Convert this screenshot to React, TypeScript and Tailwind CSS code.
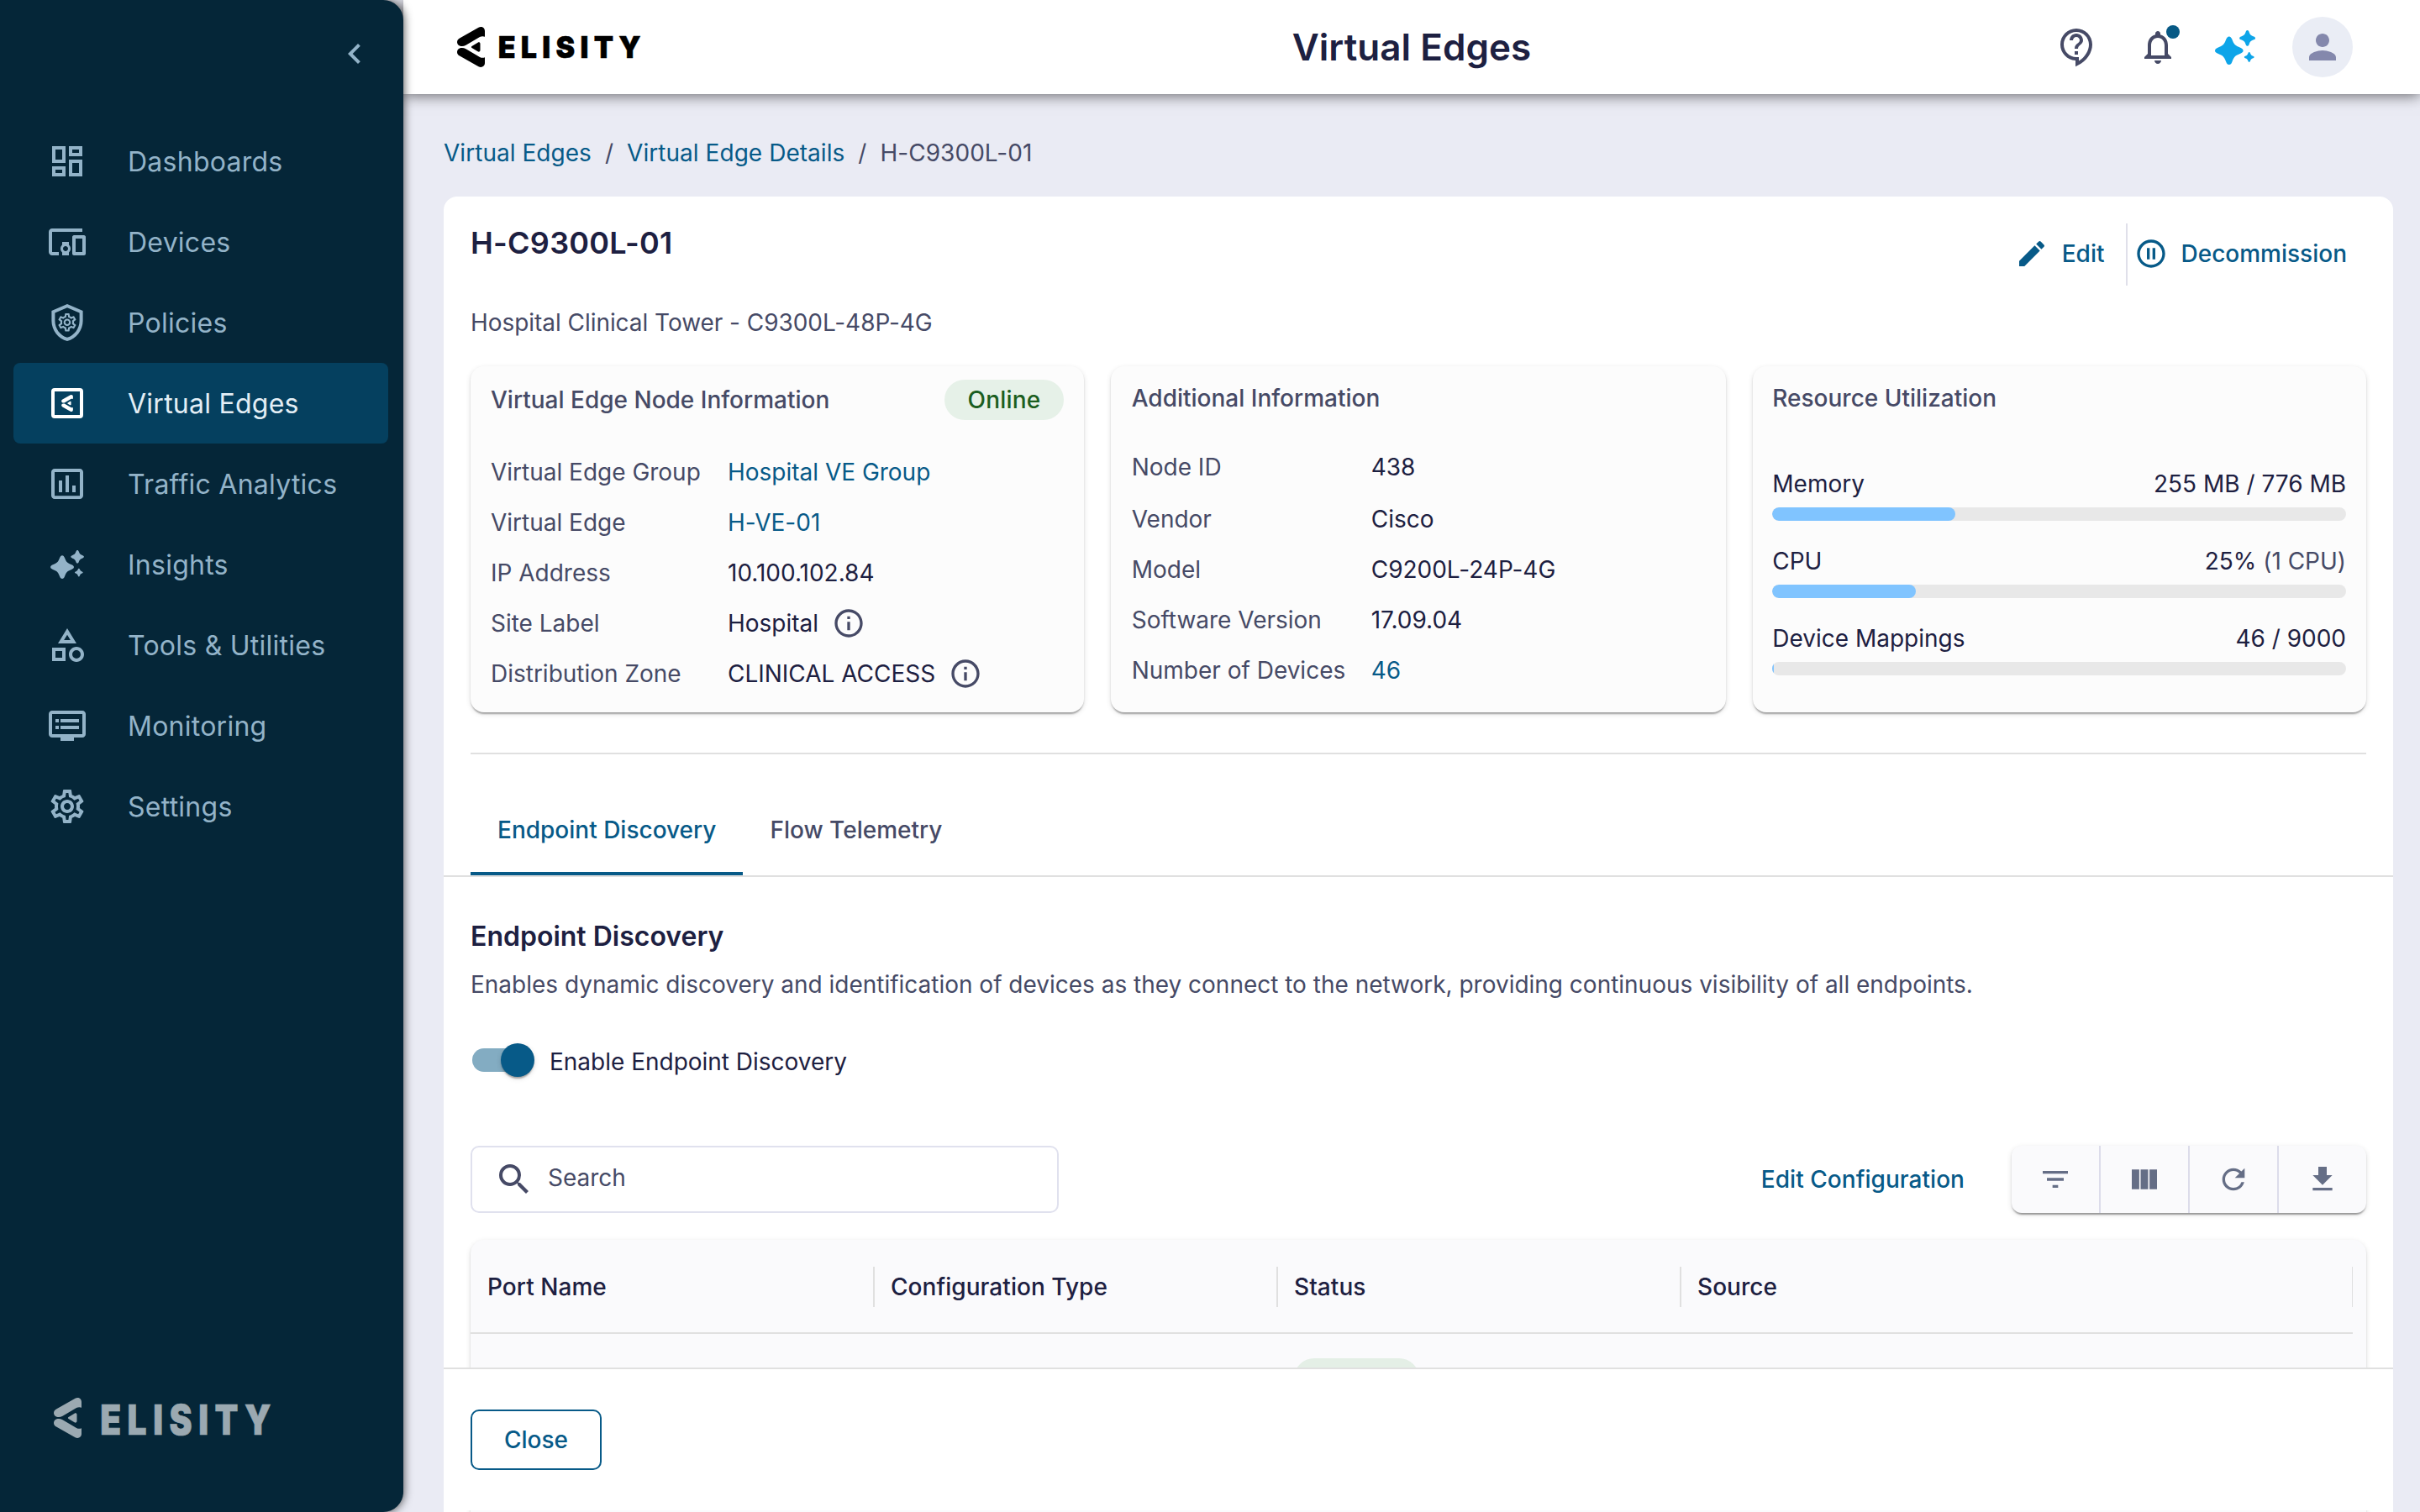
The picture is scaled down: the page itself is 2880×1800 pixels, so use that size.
import type { ReactNode } from "react"
import {
  MdChevronLeft,
  MdDevicesOther,
  MdDvr,
  MdEdit,
  MdFileDownload,
  MdFilterList,
  MdInfoOutline,
  MdNotificationsNone,
  MdOutlineCategory,
  MdOutlineContactSupport,
  MdOutlineDashboard,
  MdOutlineSettings,
  MdPauseCircleOutline,
  MdPerson,
  MdRefresh,
  MdSearch,
} from "react-icons/md"

const LOGO_WING =
  "M25.5.7C29.4-1 33 1.2 33 5v6.7c-2-.9-4.200-.7-6 .4L10.500 21.800C5.500 24.500 0 22.500 0 18c0-2 1-3.400 3-4.600z"

function LogoMark({ className }: { className?: string }) {
  return (
    <svg viewBox="0 0 33 48" fill="currentColor" className={className}>
      <path d={LOGO_WING} />
      <path d={LOGO_WING} transform="matrix(1 0 0 -1 0 48)" />
      <path d="M17.500 23.100 24.600 18.700c1.400-.8 2.900-.1 2.900 1.500v7.600c0 1.600-1.500 2.300-2.900 1.500L17.500 24.900c-.8-.5-.8-1.300 0-1.800z" />
    </svg>
  )
}

function Wordmark({ className }: { className?: string }) {
  return (
    <svg viewBox="0 0 168 26" preserveAspectRatio="none" fill="currentColor" className={className}>
      <text
        x="-2.500"
        y="26"
        transform="scale(.95 1)"
        fontSize="35.800"
        fontWeight="900"
        fontFamily="Inter"
        textLength="179"
        stroke="currentColor"
        strokeWidth=".5"
      >
        ELISITY
      </text>
    </svg>
  )
}

const STAR =
  "M0-1C.1-1 .16-.92 .21-.8 .36-.42 .42-.36 .8-.21 .92-.16 1-.1 1 0 1 .1 .92 .16 .8 .21 .42 .36 .36 .42 .21 .8 .16 .92 .1 1 0 1-.1 1-.16 .92-.21 .8-.36 .42-.42 .36-.8 .21-.92 .16-1 .1-1 0-1-.1-.92-.16-.8-.21-.42-.36-.36-.42-.21-.8-.16-.92-.1-1 0-1z"

function Sparkles({ className }: { className?: string }) {
  return (
    <svg viewBox="0 0 48 41" fill="currentColor" className={className}>
      <path d={STAR} transform="translate(16.800 24.200) scale(16.800)" />
      <path d={STAR} transform="translate(38.600 9.400) scale(9.400)" />
      <path d={STAR} transform="translate(40.700 32) scale(5.900)" />
    </svg>
  )
}

function ShieldGear() {
  return (
    <svg viewBox="0 0 24 24" fill="currentColor" className="size-12">
      <path d="M12 1 2.700 5v6c0 5.550 3.900 10.740 9.300 12 5.400-1.260 9.300-6.450 9.300-12V5L12 1zm7.300 10c0 4.520-3.050 8.690-7.300 9.930-4.250-1.240-7.300-5.410-7.300-9.930V6.300L12 3.180 19.300 6.300V11z" />
      <g transform="translate(5.500 5.400) scale(.54)">
        <MdOutlineSettings size={24} />
      </g>
    </svg>
  )
}

function EdgeIcon() {
  return (
    <div className="flex h-9 w-[38px] items-center justify-center rounded-[4px] border-4 border-current">
      <LogoMark className="h-5 w-[14px]" />
    </div>
  )
}

function ChartBox() {
  return (
    <svg viewBox="0 0 24 24" fill="currentColor" className="size-12">
      <path d="M9 17H7v-7h2v7zm4 0h-2V7h2v10zm4 0h-2v-4h2v4zm2.500 2.100h-15V5h15v14.100zm0-16.100h-15c-1.100 0-2 .9-2 2v14c0 1.100.9 2 2 2h15c1.100 0 2-.9 2-2V5c0-1.100-.9-2-2-2z" />
    </svg>
  )
}

const NAV: { label: string; icon: ReactNode; active?: boolean }[] = [
  { label: "Dashboards", icon: <MdOutlineDashboard className="size-12" /> },
  { label: "Devices", icon: <MdDevicesOther className="size-12" /> },
  { label: "Policies", icon: <ShieldGear /> },
  { label: "Virtual Edges", icon: <EdgeIcon />, active: true },
  { label: "Traffic Analytics", icon: <ChartBox /> },
  { label: "Insights", icon: <Sparkles className="h-[34px] w-10" /> },
  { label: "Tools & Utilities", icon: <MdOutlineCategory className="size-12" /> },
  { label: "Monitoring", icon: <MdDvr className="size-12" /> },
  { label: "Settings", icon: <MdOutlineSettings className="size-12" /> },
]

function Sidebar() {
  return (
    <aside className="relative z-20 flex h-full w-[480px] shrink-0 flex-col rounded-r-[24px] bg-[#052638] text-[#93b3c8] shadow-[0_0_12px_rgba(0,0,0,0.75)]">
      <div className="flex h-36 justify-end pt-10 pr-[34px]">
        <MdChevronLeft className="size-12" />
      </div>
      <nav className="flex flex-col pr-[18px] pl-4">
        {NAV.map((item) => (
          <a
            key={item.label}
            className={`flex h-24 items-center rounded-lg pl-10 text-[32px] tracking-[0.25px] ${
              item.active ? "bg-[#05405f] text-[#e3eef5]" : ""
            }`}
          >
            <span className={`flex w-12 justify-center ${item.active ? "text-white" : ""}`}>
              {item.icon}
            </span>
            <span className="ml-12 pt-0.5">{item.label}</span>
          </a>
        ))}
      </nav>
      <div className="mt-auto mb-[88px] ml-16 flex h-12 items-center text-[#9ba9b1]">
        <LogoMark className="h-12 w-[33px]" />
        <Wordmark className="mt-1 ml-[25px] h-9 w-[201px] overflow-visible" />
      </div>
    </aside>
  )
}

function Header() {
  return (
    <header className="relative z-10 grid h-28 shrink-0 grid-cols-3 items-center bg-white shadow-[0_2px_16px_rgba(0,0,0,0.55)]">
      <div className="flex items-center pl-16 text-black">
        <LogoMark className="h-12 w-[33px]" />
        <Wordmark className="ml-[18px] h-[26px] w-[168px] overflow-visible" />
      </div>
      <h1 className="text-center text-[44px] font-semibold tracking-[0.05px]">Virtual Edges</h1>
      <div className="flex items-center justify-end pr-20 text-[#464a66]">
        <MdOutlineContactSupport className="size-12" />
        <span className="relative ml-12">
          <MdNotificationsNone className="size-12" />
          <span className="absolute -top-0.5 left-[34px] size-4 rounded-full bg-[#075985]" />
        </span>
        <Sparkles className="ml-11 h-[41px] w-12 text-[#0ea5e9]" />
        <span className="ml-11 flex size-[72px] items-center justify-center rounded-full bg-[#eaedf5] text-[#8488ac]">
          <MdPerson className="size-12" />
        </span>
      </div>
    </header>
  )
}

function Row({ label, link, info, children }: { label: string; link?: boolean; info?: boolean; children: ReactNode }) {
  return (
    <>
      <dt className="text-[#464a66]">{label}</dt>
      <dd className={`flex items-center gap-4 ${link ? "text-[#075a88]" : ""}`}>
        {children}
        {info ? <MdInfoOutline className="size-10 text-[#464a66]" /> : null}
      </dd>
    </>
  )
}

function Card({ className = "px-6", children }: { className?: string; children: ReactNode }) {
  return (
    <section
      className={`h-[412px] rounded-2xl bg-[#fcfcfc] shadow-[0_4px_2px_-2px_rgba(0,0,0,0.2),0_2px_2px_rgba(0,0,0,0.14),0_2px_6px_rgba(0,0,0,0.12)] ${className}`}
    >
      {children}
    </section>
  )
}

const USAGE = [
  { label: "Memory", value: "255 MB / 776 MB", note: "", percent: 31.9 },
  { label: "CPU", value: "25%", note: " (1 CPU)", percent: 25 },
  { label: "Device Mappings", value: "46 / 9000", note: "", percent: 0.3 },
]

function InfoCards() {
  return (
    <div className="grid grid-cols-[730px_732px_730px] gap-8">
      <Card>
        <div className="flex h-20 items-center justify-between">
          <h3 className="font-medium tracking-normal text-[#464a66]">Virtual Edge Node Information</h3>
          <span className="flex h-12 w-[142px] items-center justify-center rounded-full bg-[#e6f1e8] font-medium tracking-[0.2px] text-[#1b5e20]">
            Online
          </span>
        </div>
        <dl className="mt-4 grid auto-rows-[60px] grid-cols-[282px_1fr] items-center">
          <Row label="Virtual Edge Group" link>Hospital VE Group</Row>
          <Row label="Virtual Edge" link>H-VE-01</Row>
          <Row label="IP Address">10.100.102.84</Row>
          <Row label="Site Label" info>Hospital</Row>
          <Row label="Distribution Zone" info>CLINICAL ACCESS</Row>
        </dl>
      </Card>
      <Card className="px-[24.7px]">
        <h3 className="flex h-[75px] items-center font-medium tracking-normal text-[#464a66]">Additional Information</h3>
        <dl className="mt-3 grid auto-rows-[60px] grid-cols-[285px_1fr] grid-rows-[65px] items-center">
          <Row label="Node ID">438</Row>
          <Row label="Vendor">Cisco</Row>
          <Row label="Model">C9200L-24P-4G</Row>
          <Row label="Software Version">17.09.04</Row>
          <Row label="Number of Devices" link>46</Row>
        </dl>
      </Card>
      <Card className="pr-6 pl-[23.3px]">
        <h3 className="flex h-[75px] items-center font-medium tracking-normal text-[#464a66]">Resource Utilization</h3>
        <div className="mt-[45px] flex flex-col gap-7">
          {USAGE.map((u) => (
            <div key={u.label}>
              <div className="flex h-12 items-start justify-between leading-10">
                <span>{u.label}</span>
                <span className="whitespace-pre">
                  {u.value}
                  <span className="text-[#464a66]">{u.note}</span>
                </span>
              </div>
              <div className="h-4 overflow-hidden rounded-lg bg-[#e8e8e8]">
                <div className="h-full rounded-lg bg-[#80c4ff]" style={{ width: `${u.percent}%` }} />
              </div>
            </div>
          ))}
        </div>
      </Card>
    </div>
  )
}

const COLUMNS = ["Port Name", "Configuration Type", "Status"]

function PortTable() {
  return (
    <div className="mt-8 h-[400px] rounded-t-2xl bg-[#fafafc] pr-4 shadow-[0_4px_2px_-2px_rgba(0,0,0,0.2),0_2px_2px_rgba(0,0,0,0.14),0_2px_6px_rgba(0,0,0,0.12)]">
      <div className="flex h-28 items-center border-b-2 border-[#e0e0e0] pt-0.5 font-medium tracking-[0.05px]">
        {COLUMNS.map((c) => (
          <div key={c} className="-mr-px flex h-12 w-[481px] items-center border-r-2 border-[#e0e0e0] pl-5">
            {c}
          </div>
        ))}
        <div className="flex h-12 flex-1 items-center border-r border-[#e0e0e0] pl-5">Source</div>
      </div>
      <div className="mt-[29px] ml-[980px] h-12 w-[149px] rounded-full bg-[#e4efe6]" />
    </div>
  )
}

function Toolbar() {
  return (
    <div className="mt-20 flex items-center">
      <div className="flex h-20 w-[700px] items-center rounded-[10px] border-2 border-[#e0e1ee] pl-[26px] text-[#464a66]">
        <MdSearch className="size-12" />
        <span className="mb-1 ml-4">Search</span>
      </div>
      <a className="mr-14 ml-auto font-medium tracking-[0.04px] text-[#075a88]">Edit Configuration</a>
      <div className="flex h-20 w-[422px] divide-x-2 divide-[#dcdcea] rounded-xl bg-[#fafafc] text-[#656e86] shadow-[0_4px_2px_-2px_rgba(0,0,0,0.25),0_2px_2px_rgba(0,0,0,0.14),0_2px_6px_rgba(0,0,0,0.12)]">
        <button className="flex flex-1 items-center justify-center">
          <MdFilterList className="size-10" />
        </button>
        <button className="flex flex-1 items-center justify-center">
          <svg viewBox="0 0 24 24" fill="currentColor" className="size-10">
            <path d="M14.670 5v14H9.330V5h5.340zm1 14H21V5h-5.330v14zm-7.340 0V5H3v14h5.330z" />
          </svg>
        </button>
        <button className="flex flex-1 items-center justify-center">
          <MdRefresh className="size-10" />
        </button>
        <button className="flex flex-1 items-center justify-center">
          <MdFileDownload className="size-10" />
        </button>
      </div>
    </div>
  )
}

export default function App() {
  return (
    <div className="flex h-[1800px] w-full overflow-hidden bg-[#eaebf4] font-['Inter',sans-serif] text-[28px] leading-[42px] tracking-[-0.01px] text-[#1d2041]">
      <Sidebar />
      <div className="flex min-w-0 flex-1 flex-col">
        <Header />
        <div className="mt-[49px] ml-12 flex gap-4 tracking-[0.04px] text-[#464a66]">
          <a className="text-[#075a88]">Virtual Edges</a>
          <span>/</span>
          <a className="text-[#075a88]">Virtual Edge Details</a>
          <span>/</span>
          <span>H-C9300L-01</span>
        </div>
        <main className="relative mt-[31px] mr-8 ml-12 h-[1566px] overflow-hidden rounded-t-2xl bg-white">
          <div className="flex h-[202px] justify-between px-8">
            <div className="pt-[34px]">
              <h2 className="text-[36px] font-semibold tracking-[0.25px]">H-C9300L-01</h2>
              <p className="mt-[53px] tracking-[-0.05px] text-[#464a66]">Hospital Clinical Tower - C9300L-48P-4G</p>
            </div>
            <div className="mt-8 flex h-[72px] items-center font-medium tracking-normal text-[#075a88]">
              <MdEdit className="size-10" />
              <span className="mr-[25px] ml-4">Edit</span>
              <span className="h-[74px] w-0.5 self-start bg-[#e0e0ea]" />
              <MdPauseCircleOutline className="ml-2 size-10" />
              <span className="mr-[23px] ml-4">Decommission</span>
            </div>
          </div>
          <div className="mx-8">
            <InfoCards />
            <div className="mt-12 h-0.5 bg-[#e0e0e0]" />
          </div>
          <div className="mt-8 flex h-[114px] border-b-2 border-[#e0e0e0] px-8 font-medium tracking-normal">
            <div className="h-full border-b-4 border-[#075a88] px-8 pt-[37px] text-[#075a88]">Endpoint Discovery</div>
            <div className="px-8 pt-[37px] text-[#464a66]">Flow Telemetry</div>
          </div>
          <div className="mx-8 pt-[50px]">
            <h3 className="text-[32px] font-semibold tracking-normal">Endpoint Discovery</h3>
            <p className="mt-[15px] text-[#464a66]">
              Enables dynamic discovery and identification of devices as they connect to the network, providing
              continuous visibility of all endpoints.
            </p>
            <label className="mt-[47px] flex h-11 items-center">
              <span className="ml-0.5 flex h-7 w-[68px] items-center rounded-full bg-[#83acc2] pl-[34px]">
                <span className="size-10 shrink-0 rounded-full bg-[#075a88] shadow-[0_4px_2px_-2px_rgba(0,0,0,0.2),0_2px_2px_rgba(0,0,0,0.14),0_2px_6px_rgba(0,0,0,0.12)]" />
              </span>
              <span className="ml-6 pt-[3px]">Enable Endpoint Discovery</span>
            </label>
            <Toolbar />
            <PortTable />
          </div>
          <footer className="absolute inset-x-0 bottom-0.5 h-[170px] border-t-2 border-[#e0e0e0] bg-white px-8 pt-12">
            <button className="h-[72px] w-[156px] rounded-[10px] border-2 border-[#075a88] font-medium tracking-normal text-[#075a88]">
              Close
            </button>
          </footer>
        </main>
      </div>
    </div>
  )
}
